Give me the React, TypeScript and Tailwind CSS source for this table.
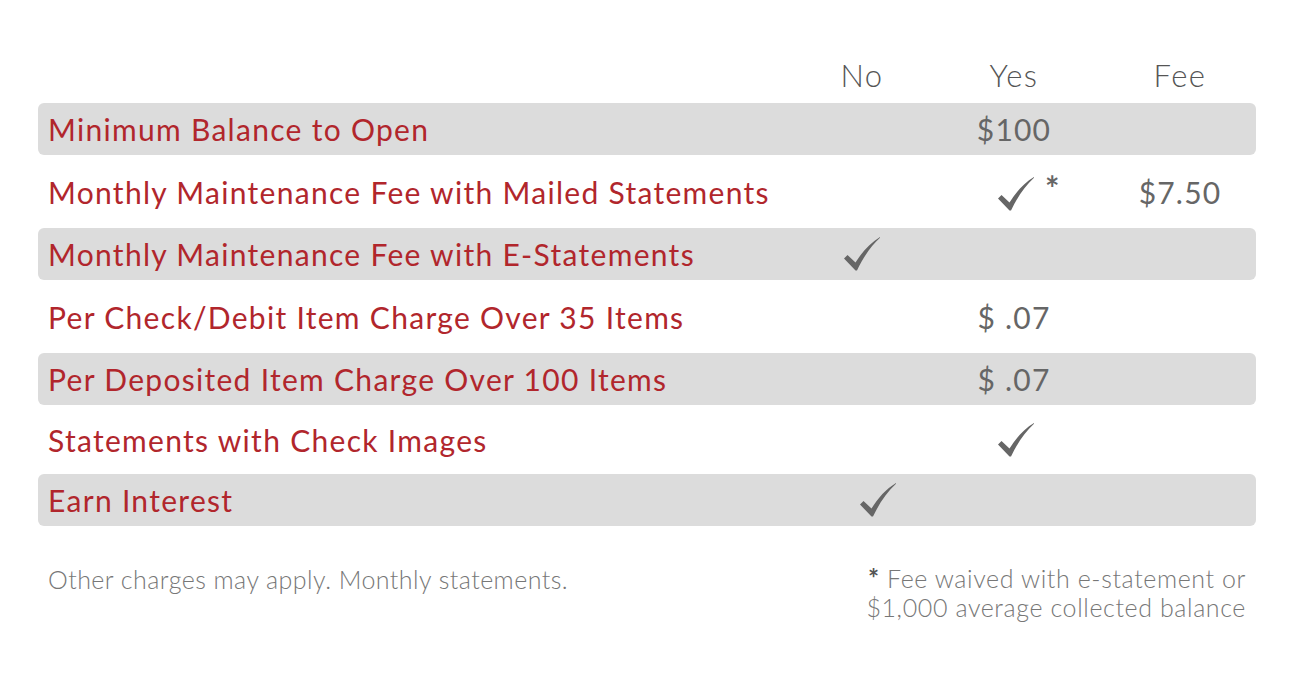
import React from 'react';

type Cell = React.ReactNode;

const Check: React.FC<{ className?: string }> = ({ className }) => (
  <svg viewBox="0 0 36 34" className={className} fill="#666666">
    <path d="M0 21.5 L3.5 18 L11.5 25.5 C18 15 26 6 36 0 L36 0.8 C27 9 19.5 20 13 33.5 L11.5 33.5 Z" />
  </svg>
);

const rows: { label: string; no?: Cell; yes?: Cell; fee?: Cell; shaded: boolean; h: string }[] = [
  { label: 'Minimum Balance to Open', yes: '$100', shaded: true, h: 'h-[52px]' },
  {
    label: 'Monthly Maintenance Fee with Mailed Statements',
    yes: (
      <span className="relative inline-block">
        <Check className="w-[36px] h-[34px] translate-x-[2px] translate-y-[2px]" />
        <span className="absolute left-[49px] top-[-4px] text-[34px] font-bold text-[#666]">*</span>
      </span>
    ),
    fee: '$7.50',
    shaded: false,
    h: 'h-[73px]',
  },
  {
    label: 'Monthly Maintenance Fee with E-Statements',
    no: <Check className="w-[36px] h-[34px]" />,
    shaded: true,
    h: 'h-[52px]',
  },
  { label: 'Per Check/Debit Item Charge Over 35 Items', yes: '$ .07', shaded: false, h: 'h-[73px]' },
  { label: 'Per Deposited Item Charge Over 100 Items', yes: '$ .07', shaded: true, h: 'h-[52px]' },
  {
    label: 'Statements with Check Images',
    yes: <Check className="w-[36px] h-[34px] translate-x-[2px]" />,
    shaded: false,
    h: 'h-[69px]',
  },
  {
    label: 'Earn Interest',
    no: <Check className="w-[36px] h-[34px] translate-x-[16px]" />,
    shaded: true,
    h: 'h-[52px]',
  },
];

const grid = 'grid grid-cols-[1fr_124px_180px_152px] items-center';

export default function App() {
  return (
    <div className="min-h-screen w-full bg-white font-['Lato','Open_Sans',sans-serif]">
      <div className="pl-[38px] pr-[42px] pt-[51px]">
        <div className={`${grid} h-[52px] pb-[4px] text-[31px] font-light tracking-[1.5px] text-[#555] leading-none`}>
          <div />
          <div className="text-center">No</div>
          <div className="text-center">Yes</div>
          <div className="text-center">Fee</div>
        </div>

        {rows.map((r) => (
          <div
            key={r.label}
            className={`${grid} ${r.h} ${r.shaded ? 'bg-[#dcdcdc] rounded-[6px]' : ''} text-[30px] leading-none`}
          >
            <div className="pl-[10px] text-[#b1262c] tracking-[1.3px] whitespace-nowrap">{r.label}</div>
            <div className="flex justify-center text-[#666]">{r.no}</div>
            <div className="flex justify-center text-[#666] tracking-[1.2px]">{r.yes}</div>
            <div className="flex justify-center text-[#666] tracking-[1.2px]">{r.fee}</div>
          </div>
        ))}

        <div className="flex justify-between pt-[38px] text-[25px] font-light text-[#777] leading-[29px]">
          <p className="pl-[10px] pt-[1px] tracking-[0.45px]">Other charges may apply. Monthly statements.</p>
          <p className="text-right pr-[10px] tracking-[0.6px]">
            <span className="text-[26px] leading-[29px] font-bold text-[#555]">*</span> Fee waived with e-statement or
            <br />
            $1,000 average collected balance
          </p>
        </div>
      </div>
    </div>
  );
}
